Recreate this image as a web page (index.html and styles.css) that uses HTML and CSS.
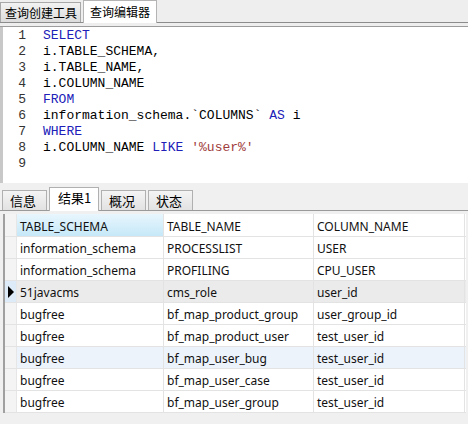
FILE: index.html
```html
<!DOCTYPE html>
<html>
<head>
<meta charset="utf-8">
<link rel="stylesheet" href="styles.css">
</head>
<body>
<div class="app">
  <div class="top-tabs">
    <div class="ttab">查询创建工具</div>
    <div class="ttab active">查询编辑器</div>
  </div>
  <div class="top-strip"></div>
  <div class="editor">
    <div class="gutter-edge"></div>
    <div class="lines">
      <div class="ln">1</div><div class="ln">2</div><div class="ln">3</div><div class="ln">4</div><div class="ln">5</div><div class="ln">6</div><div class="ln">7</div><div class="ln">8</div><div class="ln">9</div>
    </div>
    <div class="code">
      <div class="cl"><span class="kw">SELECT</span></div>
      <div class="cl">i.TABLE_SCHEMA,</div>
      <div class="cl">i.TABLE_NAME,</div>
      <div class="cl">i.COLUMN_NAME</div>
      <div class="cl"><span class="kw">FROM</span></div>
      <div class="cl">information_schema.`COLUMNS` <span class="kw">AS</span> i</div>
      <div class="cl"><span class="kw">WHERE</span></div>
      <div class="cl">i.COLUMN_NAME <span class="kw">LIKE</span> <span class="str">'%user%'</span></div>
      <div class="cl">&nbsp;</div>
    </div>
  </div>
  <div class="res-tabs">
    <div class="rtab">信息</div>
    <div class="rtab active">结果1</div>
    <div class="rtab">概况</div>
    <div class="rtab">状态</div>
  </div>
  <div class="grid-wrap">
    <div class="grid">
      <div class="row head">
        <div class="ind"></div>
        <div class="c c1 hl">TABLE_SCHEMA</div>
        <div class="c c2">TABLE_NAME</div>
        <div class="c c3">COLUMN_NAME</div>
      </div>
      <div class="row">
        <div class="ind"></div>
        <div class="c c1">information_schema</div>
        <div class="c c2">PROCESSLIST</div>
        <div class="c c3">USER</div>
      </div>
      <div class="row">
        <div class="ind"></div>
        <div class="c c1">information_schema</div>
        <div class="c c2">PROFILING</div>
        <div class="c c3">CPU_USER</div>
      </div>
      <div class="row cur">
        <div class="ind"><span class="tri"></span></div>
        <div class="c c1">51javacms</div>
        <div class="c c2">cms_role</div>
        <div class="c c3">user_id</div>
      </div>
      <div class="row">
        <div class="ind"></div>
        <div class="c c1">bugfree</div>
        <div class="c c2">bf_map_product_group</div>
        <div class="c c3">user_group_id</div>
      </div>
      <div class="row">
        <div class="ind"></div>
        <div class="c c1">bugfree</div>
        <div class="c c2">bf_map_product_user</div>
        <div class="c c3">test_user_id</div>
      </div>
      <div class="row hover">
        <div class="ind"></div>
        <div class="c c1">bugfree</div>
        <div class="c c2">bf_map_user_bug</div>
        <div class="c c3">test_user_id</div>
      </div>
      <div class="row">
        <div class="ind"></div>
        <div class="c c1">bugfree</div>
        <div class="c c2">bf_map_user_case</div>
        <div class="c c3">test_user_id</div>
      </div>
      <div class="row">
        <div class="ind"></div>
        <div class="c c1">bugfree</div>
        <div class="c c2">bf_map_user_group</div>
        <div class="c c3">test_user_id</div>
      </div>
    </div>
  </div>
</div>
</body>
</html>
```
FILE: styles.css
```css
html, body {
  margin: 0;
  padding: 0;
}
body {
  width: 468px;
  height: 424px;
  overflow: hidden;
  background: #f0f0f0;
  font-family: "Noto Sans", "Noto Sans CJK SC", sans-serif;
}
.app {
  display: flex;
  flex-direction: column;
  height: 424px;
}
.top-tabs {
  height: 22px;
  display: flex;
  align-items: flex-end;
  gap: 2px;
  background: #eeeeee;
  border-bottom: 1px solid #8c8c8c;
}
.ttab {
  font-family: "Noto Sans CJK SC", sans-serif;
  font-size: 12px;
  height: 20px;
  line-height: 20px;
  padding: 0 3px 0 4px;
  background: linear-gradient(#f2f2f2, #dcdcdc);
  border: 1px solid #a8a8a8;
  border-bottom: none;
  box-sizing: border-box;
  color: #000;
}
.ttab.active {
  height: 23px;
  line-height: 22px;
  background: #fff;
  padding: 0 6px;
  margin-bottom: -1px;
  border-color: #b4b4b4;
}
.top-strip {
  height: 3px;
  background: #eeeeee;
  border-bottom: 1px solid #9c9c9c;
}
.editor {
  height: 156px;
  background: #fff;
  display: flex;
  font-family: "Liberation Mono", monospace;
  font-size: 13px;
  line-height: 16px;
}
.gutter-edge {
  width: 3px;
  background: #c8c8c8;
}
.lines {
  width: 23px;
  text-align: right;
  color: #333;
  padding-top: 1px;
}
.code {
  padding-left: 17px;
  padding-top: 1px;
  color: #000;
}
.cl { white-space: pre; }
.kw { color: #2020b8; }
.str { color: #a03c3c; }
.res-tabs {
  height: 27px;
  display: flex;
  align-items: flex-end;
  gap: 2px;
  padding-left: 2px;
  background: #f0f0f0;
  border-bottom: 1px solid #9a9a9a;
}
.rtab {
  font-family: "Noto Sans CJK SC", sans-serif;
  font-size: 13px;
  height: 20px;
  line-height: 20px;
  width: 45px;
  padding-left: 7px;
  box-sizing: border-box;
  background: linear-gradient(#f4f4f4, #e2e2e2);
  border: 1px solid #b0b0b0;
  border-bottom: none;
}
.rtab.active {
  height: 24px;
  line-height: 19px;
  width: 50px;
  background: #fff;
  padding-left: 8px;
  margin-bottom: -1px;
}
.grid-wrap {
  flex: 1;
  background: #f0f0f0;
  padding: 3px 0 0 3px;
}
.grid {
  width: 461px;
  border-left: 2px solid #a0a0a0;
  background: #fff;
  font-size: 12px;
  color: #111;
}
.row {
  display: flex;
  height: 22px;
  border-bottom: 1px solid #e3e3e3;
  box-sizing: border-box;
}
.row.head {
  height: 23px;
}
.ind {
  width: 11px;
  background: #f4f4f4;
  border-right: 1px solid #e6e6e6;
  position: relative;
}
.c {
  line-height: 21px;
  padding: 1px 0 0 3px;
  border-right: 1px solid #e3e3e3;
  box-sizing: border-box;
  white-space: nowrap;
  overflow: hidden;
}
.head .c { line-height: 22px; padding-top: 2px; }
.c1 { width: 147px; }
.c2 { width: 150px; }
.c3 { width: 151px; }
.c.hl {
  background: linear-gradient(#e8f6fd, #c6e8f8);
}
.row.cur { background: #ebebeb; }
.row.cur .ind { background: #dcebf7; }
.row.hover { background: #edf3fb; }
.tri {
  position: absolute;
  left: 3px;
  top: 5px;
  width: 0;
  height: 0;
  border-top: 6px solid transparent;
  border-bottom: 6px solid transparent;
  border-left: 6px solid #000;
}
```
